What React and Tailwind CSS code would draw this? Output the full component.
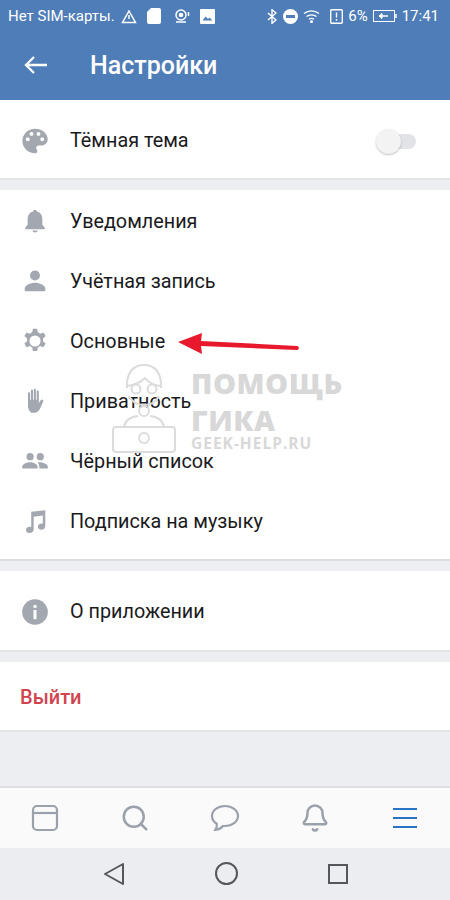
import { Bell, Search } from 'lucide-react';

const ICON = '#a3a8b0';

const PaletteIcon = () => (
    <svg width="28" height="28" viewBox="0 0 24 24" fill={ICON}>
        <path fillRule="evenodd" d="M12 1.500C6 1.500 1.200 6.200 1.200 12S6 22.500 12 22.500c1.200 0 2-.9 2-2 0-.5-.2-1-.5-1.300-.3-.4-.5-.8-.5-1.300 0-1.100.9-2 2-2h2.300c3.200 0 5.600-2.500 5.600-5.400C22.900 5.600 18 1.500 12 1.500zM5.800 12.200a1.700 1.700 0 1 1 0-3.400 1.700 1.700 0 0 1 0 3.400zM9 7.600a1.700 1.700 0 1 1 0-3.400 1.700 1.700 0 0 1 0 3.400zm6 0a1.700 1.700 0 1 1 0-3.400 1.700 1.700 0 0 1 0 3.400zm3.200 4.600a1.700 1.700 0 1 1 0-3.400 1.700 1.700 0 0 1 0 3.400z" />
    </svg>
);
const BellIcon = () => (
    <svg width="26" height="26" viewBox="0 0 24 24" fill={ICON}>
        <path d="M12 1.500c-1 0-1.700.7-1.800 1.700C7 4 5.200 6.800 5.200 10.200v5.200L3 18.200v1.300h18v-1.300l-2.200-2.800v-5.200c0-3.400-1.800-6.200-5-7C13.700 2.200 13 1.500 12 1.500zM9.500 20.700c.4 1.100 1.300 1.800 2.500 1.800s2.100-.7 2.500-1.800z" />
    </svg>
);
const PersonIcon = () => (
    <svg width="26" height="26" viewBox="0 0 24 24" fill={ICON}>
        <circle cx="12" cy="7" r="4.600" />
        <path d="M2.500 19c0-3.500 5.500-5.500 9.500-5.500s9.500 2 9.500 5.500v1.200c0 .7-.6 1.300-1.300 1.300H3.800c-.7 0-1.300-.6-1.300-1.300z" />
    </svg>
);
const GearIcon = () => (
    <svg width="30" height="30" viewBox="0 0 24 24" fill={ICON}>
        <path fillRule="evenodd" d="M13.800 1.500h-3.600l-.6 3a8 8 0 0 0-2 1.200l-2.900-1-1.800 3.100 2.300 2a8 8 0 0 0 0 2.400l-2.300 2 1.800 3.100 2.900-1a8 8 0 0 0 2 1.200l.6 3h3.600l.6-3a8 8 0 0 0 2-1.200l2.900 1 1.800-3.100-2.300-2a8 8 0 0 0 0-2.400l2.300-2-1.800-3.100-2.900 1a8 8 0 0 0-2-1.200zM12 7.200a4.800 4.800 0 1 1 0 9.600 4.800 4.800 0 0 1 0-9.600z" />
    </svg>
);
const HandIcon = () => (
    <svg width="28" height="28" viewBox="0 0 24 24" fill={ICON}>
        <path d="M6 5.500c0-1.300 1.800-1.300 1.800 0V11h.7V3.200c0-1.300 1.800-1.300 1.800 0V11h.7V2.500c0-1.300 1.800-1.300 1.800 0V11h.7V4c0-1.300 1.800-1.300 1.800 0v10l1.600-2.600c.8-1.300 2.800-.4 2.100 1l-2.700 6.200c-.9 2-2.700 3.400-5 3.400h-2.200C8.500 22 6 19.500 6 16.400z" />
    </svg>
);
const GroupIcon = () => (
    <svg width="30" height="30" viewBox="0 0 24 24" fill={ICON}>
        <circle cx="7.800" cy="8.300" r="3.100" />
        <circle cx="16.500" cy="8.300" r="3.100" />
        <path d="M1 17c0-2.500 3.800-4 6.800-4s6.400 1.500 6.400 4v1.500H1z" />
        <path d="M15.600 13c3 0 7.400 1.300 7.400 4v1.500h-7.300V17c0-1.600-.6-2.900-1.600-3.800.5-.1 1-.2 1.500-.2z" />
    </svg>
);
const MusicIcon = () => (
    <svg width="26" height="26" viewBox="0 0 24 24" fill={ICON}>
        <path d="M8.500 3.500l13-1.500v14.500c0 2-1.500 3.500-3.500 3.500s-3.300-1.200-3.300-2.800 1.300-2.900 3.300-2.900c.5 0 .9.100 1.200.2V7l-8.400 1v11.500C10.800 21.500 9.200 23 7 23s-3.300-1.200-3.300-2.800S5 17.300 7 17.300c.5 0 1 .1 1.500.2z" />
    </svg>
);
const InfoIcon = () => (
    <svg width="28" height="28" viewBox="0 0 24 24">
        <circle cx="12" cy="12" r="11" fill={ICON} />
        <circle cx="12" cy="7.200" r="1.500" fill="#fff" />
        <rect x="10.700" y="10.200" width="2.600" height="8" rx=".6" fill="#fff" />
    </svg>
);

const Row = ({ icon, label, right }) => (
    <div className="h-[60px] flex items-center">
        <div className="w-[70px] shrink-0 px-[21px] flex justify-center items-center">
            <span className="w-7 h-7 flex items-center justify-center shrink-0">{icon}</span>
        </div>
        <span className="text-[19.8px] pt-[1px] text-[#1a1a1c] flex-1">{label}</span>
        {right}
    </div>
);

const MENU = [
    ['Уведомления', <BellIcon key="b" />],
    ['Учётная запись', <PersonIcon key="p" />],
    ['Основные', <GearIcon key="g" />],
    ['Приватность', <HandIcon key="h" />],
    ['Чёрный список', <GroupIcon key="gr" />],
    ['Подписка на музыку', <MusicIcon key="m" />],
];

function StatusBar(){
    return (
        <div className="h-[31px] flex items-center justify-between pl-2 pr-[11px] text-white text-[15px] pt-[1px]">
            <div className="flex items-center">
                <span>Нет SIM-карты.</span>
                {/* warning */}
                <svg className="ml-[6px]" width="16" height="15" viewBox="0 0 16 15" fill="none" stroke="#fff" strokeWidth="1.500">
                    <path d="M8 2 L14.500 13.500 H1.500 Z" />
                    <path d="M8 6v4" />
                </svg>
                {/* sd card */}
                <svg className="ml-[10px]" width="14" height="16" viewBox="0 0 14 16" fill="#fff">
                    <path d="M4 0h8a2 2 0 0 1 2 2v12a2 2 0 0 1-2 2H2a2 2 0 0 1-2-2V4z" />
                </svg>
                {/* camera-ish */}
                <svg className="ml-[12px]" width="17" height="16" viewBox="0 0 17 16" fill="none" stroke="#fff" strokeWidth="1.500">
                    <circle cx="8" cy="7" r="5" />
                    <circle cx="8" cy="7" r="1.600" fill="#fff" />
                    <path d="M3 14h10" />
                    <path d="M15.500 4v4" />
                </svg>
                {/* image */}
                <svg className="ml-[10px]" width="15" height="15" viewBox="0 0 15 15">
                    <rect width="15" height="15" rx="1" fill="#fff" />
                    <path d="M2.500 11.500l3.200-4 2.300 2.600 1.500-1.600 3 3z" fill="#4f7db8" />
                </svg>
            </div>
            <div className="flex items-center">
                {/* bluetooth */}
                <svg width="10" height="15" viewBox="0 0 10 15" fill="none" stroke="#fff" strokeWidth="1.400">
                    <path d="M1 4l8 7-4 3.300V.7L9 4 1 11" />
                </svg>
                <span className="ml-[6px] w-[15px] h-[15px] rounded-full bg-white flex items-center justify-center">
                    <span className="w-[9px] h-[3px] bg-[#4f7db8]" />
                </span>
                {/* wifi */}
                <svg className="ml-[5px]" width="17" height="14" viewBox="0 0 17 14" fill="none" stroke="#fff" strokeWidth="1.300">
                    <path d="M1 4.500c4.200-3.600 10.800-3.600 15 0" />
                    <path d="M3.500 7.500c2.800-2.300 7.200-2.300 10 0" />
                    <path d="M6 10.300c1.500-1.100 3.500-1.100 5 0" />
                    <circle cx="8.500" cy="12.700" r=".8" fill="#fff" />
                </svg>
                {/* sim alert */}
                <svg className="ml-[10px]" width="13" height="15" viewBox="0 0 13 15" fill="none" stroke="#fff" strokeWidth="1.400">
                    <rect x=".7" y=".7" width="11.600" height="13.600" rx="1" />
                    <path d="M6.500 3.500v5M6.500 10v1.800" />
                </svg>
                <span className="ml-[5px]">6%</span>
                {/* battery */}
                <svg className="ml-[5px]" width="24" height="12" viewBox="0 0 24 12" fill="none" stroke="#fff" strokeWidth="1">
                    <rect x=".5" y=".5" width="21" height="11" />
                    <path d="M23 4v4" strokeWidth="1.500" />
                    <path d="M6 6h9" strokeWidth="1.500" />
                    <path d="M9 3.500 6 6l3 2.500z" fill="#fff" />
                </svg>
                <span className="ml-[5px]">17:41</span>
            </div>
        </div>
    );
}

export default function App(){
    return (
        <div className="relative w-[450px] h-[900px] overflow-hidden bg-[#edeef2] flex flex-col" style={{ fontFamily: 'Roboto, "Noto Sans", sans-serif' }}>
            <header className="h-[100px] bg-[#4f7db8] shrink-0 shadow-[0_1px_2px_rgba(0,0,0,0.15)]">
                <StatusBar />
                <div className="h-[69px] flex items-center pt-[1px]">
                    <svg className="ml-[24px] mb-[2px]" width="24" height="24" viewBox="0 0 24 24" fill="none" stroke="#fff" strokeWidth="2.300">
                        <path d="M23 12H2M10 4 2 12l8 8" />
                    </svg>
                    <span className="ml-[42px] text-white text-[25px] font-medium">Настройки</span>
                </div>
            </header>

            <section className="bg-white h-[80px] pt-[3px] flex flex-col justify-center shrink-0 border-b-2 border-[#e2e3e6]">
                <Row icon={<PaletteIcon />} label="Тёмная тема" right={
                    <div className="relative w-[40px] h-[20px] mr-[34px]">
                        <div className="absolute left-[4px] right-0 top-[3px] h-[15px] rounded-full bg-[#e2e3e6]" />
                        <div className="absolute left-0 top-[-2px] w-[25px] h-[25px] rounded-full bg-[#f3f3f4] shadow-[0_1px_2px_rgba(0,0,0,0.25)]" />
                    </div>
                } />
            </section>

            <section className="bg-white mt-[10px] h-[371px] pt-[1px] shrink-0 border-b-2 border-[#dcdde3]">
                {MENU.map(([label, icon]) => <Row key={label} icon={icon} label={label} />)}
            </section>

            <section className="bg-white mt-[10px] h-[81px] pt-[2px] flex flex-col justify-center shrink-0 border-b-2 border-[#e2e3e6]">
                <Row icon={<InfoIcon />} label="О приложении" />
            </section>

            <section className="bg-white mt-[10px] h-[70px] flex items-center pl-[20px] pt-[1px] shrink-0 border-b-2 border-[#e2e3e6]">
                <span className="text-[20px] font-medium text-[#d0444f]">Выйти</span>
            </section>

            <div className="flex-1" />

            <nav className="h-[62px] bg-[#fafafa] border-t-2 border-[#e0e0e3] flex items-center shrink-0">
                <div className="w-[90px] flex justify-center">
                    <svg width="28" height="28" viewBox="0 0 28 28" fill="none" stroke="#9aa1ab" strokeWidth="2.200">
                        <rect x="2" y="2" width="24" height="24" rx="4" />
                        <path d="M2 9h24" />
                    </svg>
                </div>
                <div className="w-[90px] flex justify-center">
                    <Search size={30} color="#9aa1ab" strokeWidth={2} />
                </div>
                <div className="w-[90px] flex justify-center">
                    <svg width="30" height="28" viewBox="0 0 30 28" fill="none" stroke="#9aa1ab" strokeWidth="2.200">
                        <path d="M15 2C8 2 2 6.200 2 12c0 3.300 1.800 6 4.800 7.800.3 2-.5 4.500-1.500 6 2.600-.2 6-1.600 7.600-3.800h2.100c7 0 13-4.200 13-10S22 2 15 2z" />
                    </svg>
                </div>
                <div className="w-[90px] flex justify-center">
                    <Bell size={30} color="#9aa1ab" strokeWidth={2} />
                </div>
                <div className="w-[90px] flex flex-col items-center gap-[7px]">
                    <span className="w-[24px] h-[2px] bg-[#2a72c4]" />
                    <span className="w-[24px] h-[2px] bg-[#2a72c4]" />
                    <span className="w-[24px] h-[2px] bg-[#2a72c4]" />
                </div>
            </nav>

            <div className="h-[52px] bg-[#ecedf1] flex items-center justify-center gap-[90px] shrink-0 pb-[1px]">
                <svg width="22" height="24" viewBox="0 0 22 24" fill="none" stroke="#55575c" strokeWidth="2" strokeLinejoin="round">
                    <path d="M20 2 2 12l18 10z" />
                </svg>
                <span className="w-[23px] h-[23px] rounded-full border-2 border-[#55575c]" />
                <span className="w-[20px] h-[20px] border-2 border-[#55575c]" />
            </div>

            {/* red arrow pointing at Основные */}
            <svg className="absolute left-[176px] top-[332px]" width="126" height="26" viewBox="0 0 126 26" fill="#e8192c">
                <path d="M2 10 26 1l-1 8 96 5c2.500.3 2.500 4 0 4l-96-4 1 8z" />
            </svg>

            {/* watermark */}
            <div className="absolute left-[110px] top-[362px] pointer-events-none">
                <svg width="68" height="94" viewBox="0 0 68 94" fill="none" stroke="#dcdcdc" strokeWidth="2">
                    <path d="M17 26C16 10 24 3 34 3s18 7 17 23" />
                    <path d="M17 24c8-1 14-4 18-8 3 4 8 7 16 8" />
                    <circle cx="26" cy="27" r="4.500" />
                    <circle cx="42" cy="27" r="4.500" />
                    <path d="M19 34c3 6 9 9 15 9s12-3 15-9" />
                    <circle cx="34" cy="49" r="5" />
                    <path d="M14 65c1-7 6-10 14-11M54 65c-1-7-6-10-14-11" />
                    <rect x="3" y="65" width="62" height="25" rx="3" />
                    <circle cx="34" cy="76" r="5" />
                </svg>
            </div>
            <div className="absolute left-[191px] top-[368px] text-[#d8d8d8] font-black leading-none pointer-events-none" style={{ fontFamily: '"Open Sans", Roboto, sans-serif' }}>
                <div className="text-[29px] tracking-[0.5px]">ПОМОЩЬ</div>
                <div className="text-[29px] mt-[8px] tracking-[0.5px]">ГИКА</div>
                <div className="text-[15.5px] mt-[2px] font-bold tracking-[1px]">GEEK-HELP.RU</div>
            </div>
        </div>
    );
}
